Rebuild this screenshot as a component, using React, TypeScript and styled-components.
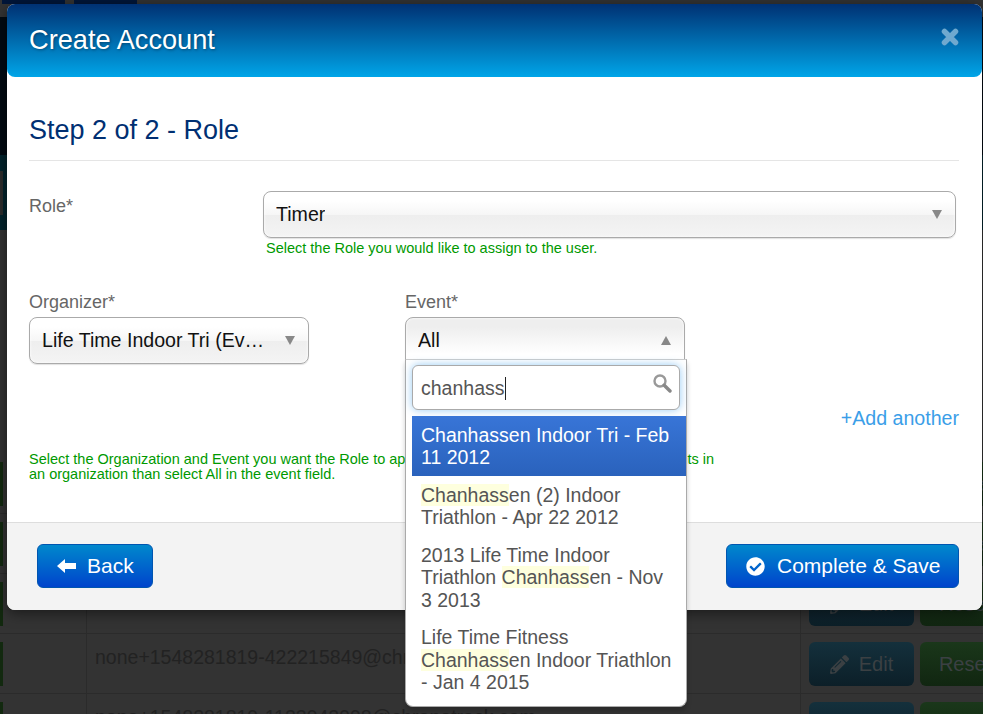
import * as React from "react";
import styled, { createGlobalStyle } from "styled-components";
import { FaCheckCircle, FaPencilAlt } from "react-icons/fa";

const GlobalStyle = createGlobalStyle`
  html, body {
    margin: 0;
    padding: 0;
    background: #333;
    font-family: "Liberation Sans", Arial, sans-serif;
  }
`;

const Page = styled.div`
  position: relative;
  width: 983px;
  height: 714px;
  overflow: hidden;
  background: #333;
`;

/* what is behind the modal */
const TopNav = styled.div`
  display: flex;
  gap: 9px;
  height: 17px;
  padding-left: 2px;
`;

const NavTab = styled.div`
  width: 63px;
  height: 4px;
  background: #00163a;
`;

const Hero = styled.div`
  height: 138px;
  background: #020a12;
`;

const Band = styled.div`
  display: flex;
  align-items: center;
  height: 75px;
  background: #03242d;
`;

const BandChip = styled.div`
  width: 3px;
  height: 44px;
  background: #2d2d2d;
`;

const Filler = styled.div`
  height: 224px;
`;

const Row = styled.div`
  display: grid;
  grid-template-columns: 87px 714px 1fr;
  height: 60px;
  box-sizing: border-box;
  border-bottom: 1px solid #2b2b2b;
`;

const Cell = styled.div`
  display: flex;
  gap: 6px;
  padding: 8px 0 0 8px;
  border-right: 1px solid #2b2b2b;
  color: #222;
  font-size: 19.5px;
  line-height: 30px;
  white-space: nowrap;
  overflow: hidden;

  &:last-child {
    border-right: 0;
  }
`;

const LeftCell = styled(Cell)`
  padding-left: 0;
`;

const LeftChip = styled.div`
  width: 3px;
  height: 44px;
  background: #12290f;
`;

const RowButton = styled.div<{ $tone: "edit" | "reset" }>`
  display: flex;
  flex: none;
  align-items: center;
  justify-content: center;
  gap: 10px;
  width: ${props => props.$tone === "edit" ? "105px" : "90px"};
  height: 44px;
  box-sizing: border-box;
  border-radius: 6px;
  background: ${props => props.$tone === "edit"
    ? "linear-gradient(#14303c, #0c1f28)"
    : "linear-gradient(#1a371a, #112611)"};
  color: #3b4043;
  font-size: 20px;
`;

/* modal */
const Modal = styled.div`
  position: absolute;
  top: 4px;
  left: 7px;
  width: 975px;
  height: 606px;
  display: flex;
  flex-direction: column;
  border-radius: 8px;
  background: #fff;
  box-shadow: 0 3px 14px rgba(0, 0, 0, 0.5);
`;

const ModalHeader = styled.div`
  display: flex;
  align-items: center;
  justify-content: space-between;
  height: 73px;
  flex: none;
  box-sizing: border-box;
  padding: 0 23px 2px 22px;
  border-radius: 8px;
  background: linear-gradient(#003173, #00a5e8);
`;

const ModalTitle = styled.h3`
  margin: 0;
  color: #fff;
  font-size: 27.2px;
  font-weight: normal;
  text-shadow: 1px 1px 3px rgba(0, 0, 0, 0.35);
`;

const CloseIcon = styled.svg`
  width: 18px;
  height: 18px;
  margin-top: -6px;
`;

const ModalBody = styled.div`
  flex: 1;
  padding: 0 23px 0 22px;
`;

const StepTitle = styled.h2`
  margin: 0;
  height: 84px;
  box-sizing: border-box;
  padding-top: 37px;
  border-bottom: 1px solid #e5e5e5;
  color: #002f72;
  font-size: 27px;
  font-weight: normal;
  line-height: 32px;
`;

const RoleRow = styled.div`
  display: grid;
  grid-template-columns: 234px 693px;
  margin-top: 30px;
`;

const Label = styled.label`
  display: block;
  color: #666;
  font-size: 18px;
  line-height: 22px;
`;

const RoleLabel = styled(Label)`
  margin-top: 4px;
`;

const Select = styled.div<{ $open?: boolean }>`
  display: flex;
  align-items: center;
  justify-content: space-between;
  height: 47px;
  box-sizing: border-box;
  padding: 0 13px 0 12px;
  border: 1px solid #aaa;
  border-radius: ${props => props.$open ? "8px 8px 0 0" : "8px"};
  background: ${props => props.$open
    ? "linear-gradient(#eee 20%, #fff 80%)"
    : "linear-gradient(#fff 20%, #f6f6f6 50%, #eee 52%, #f4f4f4)"};
  box-shadow: inset 0 0 3px #fff, 0 1px 1px rgba(0, 0, 0, 0.12);
  color: #111;
  font-size: 19.6px;
`;

const SelectText = styled.span`
  overflow: hidden;
  white-space: nowrap;
  text-overflow: ellipsis;
`;

const Caret = styled.span<{ $up?: boolean }>`
  flex: none;
  margin-left: 12px;
  width: 0;
  height: 0;
  border-left: 5.5px solid transparent;
  border-right: 5.5px solid transparent;
  border-top: ${props => props.$up ? "0" : "9px solid #888"};
  border-bottom: ${props => props.$up ? "9px solid #888" : "0"};
`;

const HelpText = styled.div`
  margin: 2px 0 0 3px;
  color: #090;
  font-size: 14.5px;
  line-height: 16px;
`;

const PickRow = styled.div`
  display: flex;
  gap: 96px;
  margin-top: 35px;
`;

const PickField = styled.div`
  position: relative;
  display: flex;
  flex-direction: column;
  gap: 4px;
  width: 280px;
`;

const AddRow = styled.div`
  display: flex;
  justify-content: flex-end;
  margin-top: 43px;
`;

const AddLink = styled.a`
  color: #3a9ee8;
  font-size: 19.6px;
  line-height: 22px;
`;

const Note = styled.div`
  width: 695px;
  margin-top: 23px;
  color: #090;
  font-size: 14.5px;
  line-height: 15px;
`;

/* open event dropdown */
const Drop = styled.div`
  position: absolute;
  z-index: 2;
  top: 68px;
  left: 0;
  width: 282px;
  box-sizing: border-box;
  padding: 5px 0 5px 6px;
  border: 1px solid #aaa;
  border-top-color: #ccc;
  border-radius: 0 0 8px 8px;
  background: #fff;
  box-shadow: 0 4px 5px rgba(0, 0, 0, 0.2);
`;

const SearchBox = styled.div`
  display: flex;
  align-items: center;
  justify-content: space-between;
  width: 268px;
  height: 45px;
  box-sizing: border-box;
  padding: 0 7px 0 8px;
  border: 1px solid #aaa;
  border-radius: 6px;
  background: #fff;
  box-shadow: 0 0 8px rgba(82, 168, 236, 0.6);
  color: #555;
  font-size: 19.5px;
`;

const Typed = styled.span`
  margin-top: 1px;
  padding-right: 1px;
  border-right: 1px solid #222;
  line-height: 23px;
`;

const SearchIcon = styled.svg`
  align-self: flex-start;
  margin-top: 7px;
  width: 20px;
  height: 20px;
`;

const Results = styled.ul`
  margin: 6px 0 0;
  padding: 0;
  list-style: none;
`;

const Result = styled.li<{ $active?: boolean }>`
  padding: 7.5px 9px;
  background: ${props => props.$active ? "linear-gradient(#3875d7, #2a62bc)" : "transparent"};
  color: ${props => props.$active ? "#fff" : "#555"};
  font-size: 19.5px;
  line-height: 22.5px;
`;

const Match = styled.span`
  background: #feffde;
`;

const ModalFooter = styled.div`
  display: flex;
  align-items: flex-start;
  justify-content: space-between;
  height: 88px;
  flex: none;
  box-sizing: border-box;
  padding: 21px 23px 0 30px;
  border-top: 1px solid #ddd;
  border-radius: 0 0 8px 8px;
  background: #f3f3f3;
`;

const Button = styled.button<{ $width: number }>`
  display: flex;
  align-items: center;
  gap: 11px;
  width: ${props => props.$width}px;
  height: 44px;
  box-sizing: border-box;
  padding: 0 0 0 19px;
  border: 1px solid #0055b0;
  border-radius: 6px;
  background: linear-gradient(#0088cc, #0044cc);
  color: #fff;
  font-family: inherit;
  font-size: 21px;
`;

const BackArrow = styled.svg`
  width: 19px;
  height: 14px;
  flex: none;
`;

const CheckIcon = styled(FaCheckCircle)`
  flex: none;
  margin-right: 1px;
  font-size: 19px;
`;

const events = [
  { active: true, parts: ["Chanhassen Indoor Tri - Feb 11 2012"] },
  { parts: ["", "Chanhass", "en (2) Indoor Triathlon - Apr 22 2012"] },
  { parts: ["2013 Life Time Indoor Triathlon ", "Chanhass", "en - Nov 3 2013"] },
  { parts: ["Life Time Fitness ", "Chanhass", "en Indoor Triathlon - Jan 4 2015"] },
];

const rows = [
  { email: "" },
  { email: "" },
  { email: "" },
  { email: "none+1548281819-422215849@chronotrack.com" },
  { email: "none+1548281819-1123942998@chronotrack.com" },
];

const App = () => {
  return (
    <Page>
      <GlobalStyle />
      <TopNav>
        <NavTab />
        <NavTab />
      </TopNav>
      <Hero />
      <Band>
        <BandChip />
      </Band>
      <Filler />
      {rows.map((row, i) => (
        <Row key={i}>
          <LeftCell>
            <LeftChip />
          </LeftCell>
          <Cell>{row.email}</Cell>
          <Cell>
            <RowButton $tone="edit">
              <FaPencilAlt size={19} />
              Edit
            </RowButton>
            <RowButton $tone="reset">Reset</RowButton>
          </Cell>
        </Row>
      ))}

      <Modal>
        <ModalHeader>
          <ModalTitle>Create Account</ModalTitle>
          <CloseIcon viewBox="0 0 18 18">
            <path d="M3.5 3.5 L14.5 14.5 M14.5 3.5 L3.5 14.5" stroke="#6fa9cf" strokeWidth="5.5" strokeLinecap="round" />
          </CloseIcon>
        </ModalHeader>
        <ModalBody>
          <StepTitle>Step 2 of 2 - Role</StepTitle>
          <RoleRow>
            <RoleLabel>Role*</RoleLabel>
            <div>
              <Select>
                <SelectText>Timer</SelectText>
                <Caret />
              </Select>
              <HelpText>Select the Role you would like to assign to the user.</HelpText>
            </div>
          </RoleRow>
          <PickRow>
            <PickField>
              <Label>Organizer*</Label>
              <Select>
                <SelectText>Life Time Indoor Tri (Event Organizer)</SelectText>
                <Caret />
              </Select>
            </PickField>
            <PickField>
              <Label>Event*</Label>
              <Select $open>
                <SelectText>All</SelectText>
                <Caret $up />
              </Select>
              <Drop>
                <SearchBox>
                  <Typed>chanhass</Typed>
                  <SearchIcon viewBox="0 0 20 20">
                    <circle cx="8" cy="8" r="5.5" fill="none" stroke="#999" strokeWidth="2.4" />
                    <path d="M12.2 12.2 L18 18" stroke="#888" strokeWidth="3.4" strokeLinecap="round" />
                  </SearchIcon>
                </SearchBox>
                <Results>
                  {events.map((event, i) => (
                    <Result key={i} $active={event.active}>
                      {event.parts.map((part, j) => (
                        j === 1 ? <Match key={j}>{part}</Match> : <span key={j}>{part}</span>
                      ))}
                    </Result>
                  ))}
                </Results>
              </Drop>
            </PickField>
          </PickRow>
          <AddRow>
            <AddLink>+Add another</AddLink>
          </AddRow>
          <Note>
            Select the Organization and Event you want the Role to apply to. If you would like it to apply to all events in an organization than select All in the event field.
          </Note>
        </ModalBody>
        <ModalFooter>
          <Button $width={116}>
            <BackArrow viewBox="0 0 19 14">
              <path d="M0 7 L8 0 V4 H19 V10 H8 V14 Z" fill="#fff" />
            </BackArrow>
            Back
          </Button>
          <Button $width={233}>
            <CheckIcon />
            Complete &amp; Save
          </Button>
        </ModalFooter>
      </Modal>
    </Page>
  );
};

export default App;
